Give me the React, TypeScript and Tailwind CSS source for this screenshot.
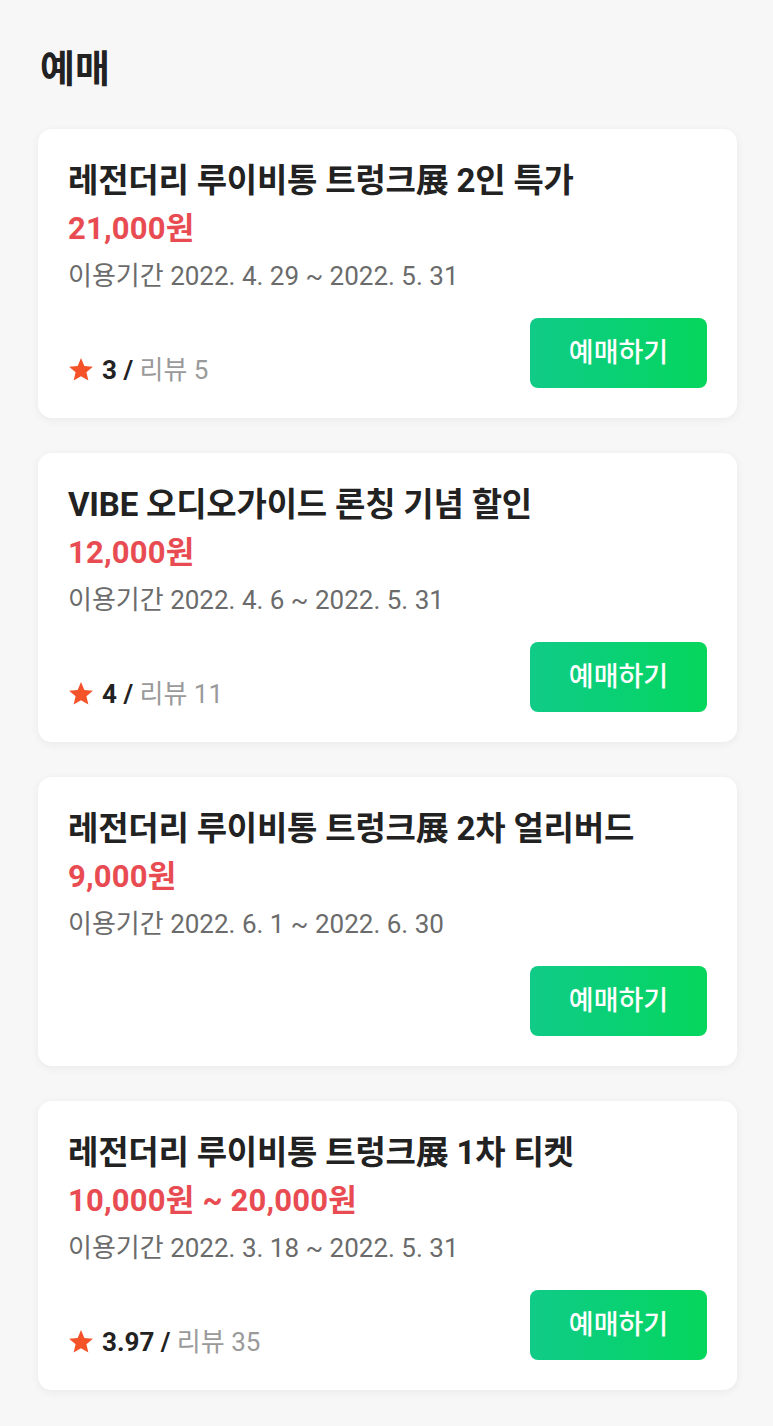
import React from "react";

type Item = {
  title: string;
  price: string;
  period: string;
  rating?: string;
  reviews?: string;
};

const items: Item[] = [
  { title: "레전더리 루이비통 트렁크展 2인 특가", price: "21,000원", period: "이용기간 2022. 4. 29 ~ 2022. 5. 31", rating: "3", reviews: "5" },
  { title: "VIBE 오디오가이드 론칭 기념 할인", price: "12,000원", period: "이용기간 2022. 4. 6 ~ 2022. 5. 31", rating: "4", reviews: "11" },
  { title: "레전더리 루이비통 트렁크展 2차 얼리버드", price: "9,000원", period: "이용기간 2022. 6. 1 ~ 2022. 6. 30" },
  { title: "레전더리 루이비통 트렁크展 1차 티켓", price: "10,000원 ~ 20,000원", period: "이용기간 2022. 3. 18 ~ 2022. 5. 31", rating: "3.97", reviews: "35" },
];

function Star() {
  return (
    <svg width="26" height="26" viewBox="0 0 24 24" className="shrink-0">
      <path d="M12 1l3.1 7.2 7.9.7-6 5.2 1.8 7.7L12 17.8l-6.8 4 1.8-7.7-6-5.2 7.9-.7z" fill="#f4532a" />
    </svg>
  );
}

function Card({ item }: { item: Item }) {
  return (
    <div className="bg-white rounded-[14px] shadow-[0_2px_10px_rgba(0,0,0,0.06)] px-[30px] pt-[30px] pb-[30px]">
      <div className="text-[33px] leading-[44px] font-bold text-[#222222] tracking-[-0.2px]">{item.title}</div>
      <div className="text-[31px] leading-[52px] font-bold text-[#e84c52] tracking-[0.2px]">{item.price}</div>
      <div className="text-[26px] leading-[42px] text-[#6b6b6b]">{item.period}</div>
      <div className="mt-[21px] flex items-end justify-between">
        <div className="flex items-center gap-[8px] pb-[2px]">
          {item.rating && (
            <>
              <Star />
              <span className="text-[26px] leading-[32px]">
                <span className="font-bold text-[#222222]">{item.rating} /</span>
                <span className="text-[#9a9a9a]"> 리뷰 {item.reviews}</span>
              </span>
            </>
          )}
        </div>
        <button className="w-[177px] h-[70px] rounded-[8px] bg-gradient-to-r from-[#10cb87] to-[#05d65b] text-white text-[27px] font-medium">
          예매하기
        </button>
      </div>
    </div>
  );
}

export default function App() {
  return (
    <div
      className="min-h-[1426px] bg-[#f7f7f7] pl-[38px] pr-[36px] pt-[45px] pb-[37px]"
      style={{ fontFamily: 'Roboto, "Noto Sans CJK KR", sans-serif' }}
    >
      <h1 className="text-[38px] leading-[48px] font-bold text-[#222222] pl-[2px] mb-[36px]">예매</h1>
      <div className="flex flex-col gap-[35px]">
        {items.map((it, i) => (
          <Card key={i} item={it} />
        ))}
      </div>
    </div>
  );
}
